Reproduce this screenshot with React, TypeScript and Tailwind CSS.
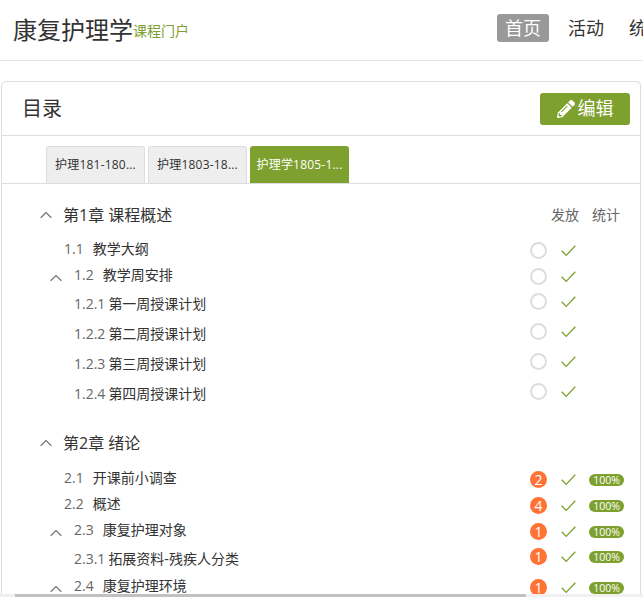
import React from 'react';
import { ChevronUp } from 'lucide-react';
import { FaPencilAlt } from 'react-icons/fa';

type Row = {
  num: string;
  title: string;
  level: 1 | 2 | 3;
  count?: number;
  pct?: boolean;
  cls: string;
};

const chapter1: Row[] = [
  { num: '1.1', title: '教学大纲', level: 1, cls: 'h-[26px]' },
  { num: '1.2', title: '教学周安排', level: 2, cls: 'h-[26px]' },
  { num: '1.2.1', title: '第一周授课计划', level: 3, cls: 'h-[30px] mt-[1px]' },
  { num: '1.2.2', title: '第二周授课计划', level: 3, cls: 'h-[30px]' },
  { num: '1.2.3', title: '第三周授课计划', level: 3, cls: 'h-[30px]' },
  { num: '1.2.4', title: '第四周授课计划', level: 3, cls: 'h-[30px]' },
];

const chapter2: Row[] = [
  { num: '2.1', title: '开课前小调查', level: 1, count: 2, pct: true, cls: 'h-[26px]' },
  { num: '2.2', title: '概述', level: 1, count: 4, pct: true, cls: 'h-[26px]' },
  { num: '2.3', title: '康复护理对象', level: 2, count: 1, pct: true, cls: 'h-[26px]' },
  { num: '2.3.1', title: '拓展资料-残疾人分类', level: 3, count: 1, pct: true, cls: 'h-[30px] mt-[1px]' },
  { num: '2.4', title: '康复护理环境', level: 2, count: 1, pct: true, cls: 'h-[26px] -mt-[1px]' },
];

const TickIcon = () => (
  <svg width="15" height="12" viewBox="0 0 15 12" fill="none" className="shrink-0">
    <path d="M0.7 5.7 L5.2 10.4 L14.3 0.8" stroke="#7da02e" strokeWidth="1.3" />
  </svg>
);

const TreeRow = ({ row }: { row: Row }) => (
  <div className={`flex items-center ${row.cls}`}>
    <div className="flex-1 flex items-center text-[14px] min-w-0">
      {row.level === 1 && <span className="w-[62px] shrink-0" />}
      {row.level === 2 && (
        <span className="w-[72px] shrink-0 flex justify-end pr-[8px]">
          <ChevronUp size={20} strokeWidth={1.4} className="text-[#777] mt-[5px]" />
        </span>
      )}
      {row.level === 3 && <span className="w-[72px] shrink-0" />}
      <span className="text-[#666] -mt-[2px]">{row.num}</span>
      <span className={`text-[#333] -mt-[2px] ${row.level === 3 ? 'ml-[3px]' : 'ml-[9px]'}`}>{row.title}</span>
    </div>
    <div className={`flex items-center shrink-0 ${row.level === 3 ? 'mb-[5px]' : 'mt-[3px]'}`}>
      {row.count ? (
        <span className="w-[17px] h-[17px] rounded-full bg-[#ff7337] text-white text-[14px] font-medium flex items-center justify-center">
          {row.count}
        </span>
      ) : (
        <span className="w-[17px] h-[17px] rounded-full border-2 border-[#ddd]" />
      )}
      <span className="ml-[14px] mr-[13px] flex">
        <TickIcon />
      </span>
      <div className="w-[35px] mr-[16px]">
        {row.pct && (
          <span className="block h-[12px] rounded-[6px] bg-[#7da02e] text-white text-[10.5px] leading-[12px] text-center">
            100%
          </span>
        )}
      </div>
    </div>
  </div>
);

const Chapter = ({ title, rows, rowsCls, right }: { title: string; rows: Row[]; rowsCls: string; right?: boolean }) => (
  <div>
    <div className="h-[36px] flex items-center">
      <span className="w-[61px] shrink-0 flex justify-end pr-[7px]">
        <ChevronUp size={20} strokeWidth={1.4} className="text-[#777]" />
      </span>
      <span className="flex-1 text-[16px] text-[#333]">{title}</span>
      {right && (
        <span className="flex gap-[13px] pr-[20px] mb-[2px] text-[14px] text-[#666]">
          <span>发放</span>
          <span>统计</span>
        </span>
      )}
    </div>
    <div className={rowsCls}>
      {rows.map(row => (
        <TreeRow key={row.num} row={row} />
      ))}
    </div>
  </div>
);

export default function App() {
  return (
    <div
      className="relative h-[597px] w-[643px] overflow-hidden bg-white"
      style={{ fontFamily: '"Open Sans", "Noto Sans CJK SC", sans-serif' }}
    >
      <header className="h-[61px] border-b border-[#e5e5e5] flex items-center pl-[13px] overflow-hidden">
        <h1 className="text-[24px] text-[#333] font-normal whitespace-nowrap">康复护理学</h1>
        <span className="text-[14px] text-[#7da02e] whitespace-nowrap">课程门户</span>
        <nav className="ml-[308px] flex items-center gap-[12px] text-[18px] text-[#333] whitespace-nowrap -mt-[4px]">
          <span className="bg-[#999] text-white rounded-[3px] h-[28px] w-[52px] flex items-center justify-center">首页</span>
          <span className="px-[7px]">活动</span>
          <span className="pl-[6px]">统计</span>
        </nav>
      </header>

      <main className="mt-[20px] ml-[1px] w-[640px] rounded-t-[5px] border border-b-0 border-[#ddd]">
        <div className="h-[54px] border-b border-[#ddd] flex items-center justify-between pl-[20px] pr-[10px]">
          <h2 className="text-[20px] text-[#333] font-normal">目录</h2>
          <button className="w-[90px] h-[32px] rounded-[3px] bg-[#7da02e] text-white text-[18px] flex items-center justify-center gap-[3px]">
            <FaPencilAlt size={18} />
            编辑
          </button>
        </div>

        <div className="h-[48px] border-b border-[#ddd] flex items-end pl-[44px] gap-[3px]">
          {['护理181-180...', '护理1803-18...'].map(name => (
            <div
              key={name}
              className="w-[99px] h-[37px] rounded-t-[3px] border border-b-0 border-[#ddd] bg-[#eee] text-[#333] text-[12px] tracking-[0.2px] flex items-center justify-center"
            >
              {name}
            </div>
          ))}
          <div className="w-[99px] h-[37px] rounded-t-[3px] bg-[#7da02e] text-white text-[12px] tracking-[0.2px] flex items-center justify-center">
            护理学1805-1...
          </div>
        </div>

        <div className="pt-[13px]">
          <Chapter title="第1章 课程概述" rows={chapter1} rowsCls="mt-[3px]" right />
          <div className="mt-[16px]">
            <Chapter title="第2章 绪论" rows={chapter2} rowsCls="mt-[4px]" />
          </div>
        </div>
      </main>

      <div className="absolute left-0 right-0 bottom-0 h-[3px] bg-[#f0f0f0]">
        <div className="ml-[15px] w-[511px] h-full bg-[#c1c1c1]" />
      </div>
    </div>
  );
}
